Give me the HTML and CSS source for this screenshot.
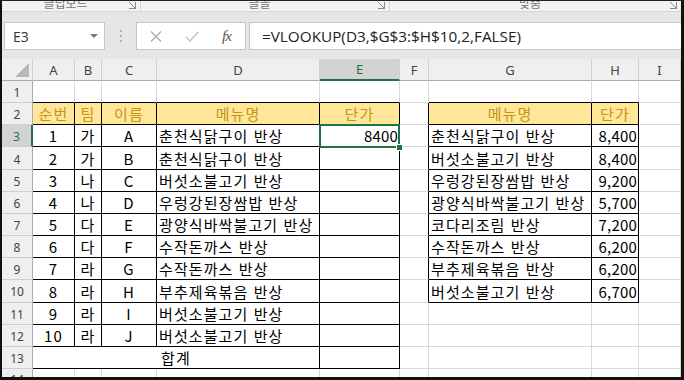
FILE: index.html
```html
<!DOCTYPE html>
<html lang="ko">
<head>
    <meta charset="UTF-8">
    <title>VLOOKUP 단가</title>
    <link rel="stylesheet" href="styles.css">
</head>
<body>

<div class="ventana">
    <!-- grupos de la cinta, cortados arriba -->
    <div class="cinta">
        <div class="grupo g1"><span class="etiqueta">클립보드</span><span class="lanzador"></span></div>
        <div class="grupo g2"><span class="etiqueta">글꼴</span><span class="lanzador"></span></div>
        <div class="grupo g3"><span class="etiqueta">맞춤</span><span class="lanzador"></span></div>
    </div>

    <!-- barra de formulas -->
    <div class="barra">
        <div class="nombre">
            <span>E3</span>
            <span class="flecha"></span>
        </div>
        <div class="puntos"><i></i><i></i><i></i></div>
        <div class="acciones">
            <svg class="ico" width="12" height="11" viewBox="0 0 12 11"><path d="M1 0.5 L11 10.5 M11 0.5 L1 10.5" stroke="#a8a8a8" stroke-width="1.2" fill="none"/></svg>
            <svg class="ico" width="14" height="11" viewBox="0 0 14 11"><path d="M1 6 L5 10 L13 1" stroke="#c2c2c2" stroke-width="1.4" fill="none"/></svg>
            <span class="fx">fx</span>
        </div>
        <div class="formula">=VLOOKUP(D3,$G$3:$H$10,2,FALSE)</div>
    </div>

    <div class="hoja">
        <!-- encabezados de columna -->
        <div class="ch esquina"><svg width="14" height="14" viewBox="0 0 14 14"><polygon points="14,0 14,14 0,14" fill="#b9b9b9"/></svg></div>
        <div class="ch">A</div>
        <div class="ch">B</div>
        <div class="ch">C</div>
        <div class="ch">D</div>
        <div class="ch activo">E</div>
        <div class="ch">F</div>
        <div class="ch">G</div>
        <div class="ch">H</div>
        <div class="ch">I</div>

        <!-- 1 -->
        <div class="rh">1</div>
        <div class="c tb"></div><div class="c tb"></div><div class="c tb"></div><div class="c tb"></div><div class="c tb"></div>
        <div class="c"></div>
        <div class="c tb"></div><div class="c tb"></div>
        <div class="c"></div>

        <!-- 2 -->
        <div class="rh">2</div>
        <div class="c b hd ctr">순번</div>
        <div class="c b hd ctr">팀</div>
        <div class="c b hd ctr">이름</div>
        <div class="c b hd ctr">메뉴명</div>
        <div class="c b hd ctr">단가</div>
        <div class="c lb"></div>
        <div class="c b hd ctr">메뉴명</div>
        <div class="c b hd ctr">단가</div>
        <div class="c"></div>

        <!-- 3 -->
        <div class="rh activo">3</div>
        <div class="c b ctr">1</div>
        <div class="c b ctr">가</div>
        <div class="c b ctr">A</div>
        <div class="c b">춘천식닭구이 반상</div>
        <div class="c b num sel">8400</div>
        <div class="c lb"></div>
        <div class="c b">춘천식닭구이 반상</div>
        <div class="c b num">8,400</div>
        <div class="c"></div>

        <!-- 4 -->
        <div class="rh">4</div>
        <div class="c b ctr">2</div>
        <div class="c b ctr">가</div>
        <div class="c b ctr">B</div>
        <div class="c b">춘천식닭구이 반상</div>
        <div class="c b num"></div>
        <div class="c lb"></div>
        <div class="c b">버섯소불고기 반상</div>
        <div class="c b num">8,400</div>
        <div class="c"></div>

        <!-- 5 -->
        <div class="rh">5</div>
        <div class="c b ctr">3</div>
        <div class="c b ctr">나</div>
        <div class="c b ctr">C</div>
        <div class="c b">버섯소불고기 반상</div>
        <div class="c b num"></div>
        <div class="c lb"></div>
        <div class="c b">우렁강된장쌈밥 반상</div>
        <div class="c b num">9,200</div>
        <div class="c"></div>

        <!-- 6 -->
        <div class="rh">6</div>
        <div class="c b ctr">4</div>
        <div class="c b ctr">나</div>
        <div class="c b ctr">D</div>
        <div class="c b">우렁강된장쌈밥 반상</div>
        <div class="c b num"></div>
        <div class="c lb"></div>
        <div class="c b">광양식바싹불고기 반상</div>
        <div class="c b num">5,700</div>
        <div class="c"></div>

        <!-- 7 -->
        <div class="rh">7</div>
        <div class="c b ctr">5</div>
        <div class="c b ctr">다</div>
        <div class="c b ctr">E</div>
        <div class="c b">광양식바싹불고기 반상</div>
        <div class="c b num"></div>
        <div class="c lb"></div>
        <div class="c b">코다리조림 반상</div>
        <div class="c b num">7,200</div>
        <div class="c"></div>

        <!-- 8 -->
        <div class="rh">8</div>
        <div class="c b ctr">6</div>
        <div class="c b ctr">다</div>
        <div class="c b ctr">F</div>
        <div class="c b">수작돈까스 반상</div>
        <div class="c b num"></div>
        <div class="c lb"></div>
        <div class="c b">수작돈까스 반상</div>
        <div class="c b num">6,200</div>
        <div class="c"></div>

        <!-- 9 -->
        <div class="rh">9</div>
        <div class="c b ctr">7</div>
        <div class="c b ctr">라</div>
        <div class="c b ctr">G</div>
        <div class="c b">수작돈까스 반상</div>
        <div class="c b num"></div>
        <div class="c lb"></div>
        <div class="c b">부추제육볶음 반상</div>
        <div class="c b num">6,200</div>
        <div class="c"></div>

        <!-- 10 -->
        <div class="rh">10</div>
        <div class="c b ctr">8</div>
        <div class="c b ctr">라</div>
        <div class="c b ctr">H</div>
        <div class="c b">부추제육볶음 반상</div>
        <div class="c b num"></div>
        <div class="c lb"></div>
        <div class="c b">버섯소불고기 반상</div>
        <div class="c b num">6,700</div>
        <div class="c"></div>

        <!-- 11 -->
        <div class="rh">11</div>
        <div class="c b ctr">9</div>
        <div class="c b ctr">라</div>
        <div class="c b ctr">I</div>
        <div class="c b">버섯소불고기 반상</div>
        <div class="c b num"></div>
        <div class="c"></div><div class="c"></div><div class="c"></div><div class="c"></div>

        <!-- 12 -->
        <div class="rh">12</div>
        <div class="c b ctr">10</div>
        <div class="c b ctr">라</div>
        <div class="c b ctr">J</div>
        <div class="c b">버섯소불고기 반상</div>
        <div class="c b num"></div>
        <div class="c"></div><div class="c"></div><div class="c"></div><div class="c"></div>

        <!-- 13 -->
        <div class="rh">13</div>
        <div class="c b ctr combinada">합계</div>
        <div class="c b num"></div>
        <div class="c"></div><div class="c"></div><div class="c"></div><div class="c"></div>

        <!-- 14 -->
        <div class="rh">14</div>
        <div class="c"></div><div class="c"></div><div class="c"></div><div class="c"></div><div class="c"></div>
        <div class="c"></div><div class="c"></div><div class="c"></div><div class="c"></div>
    </div>
</div>

</body>
</html>
```

FILE: styles.css
```css
body {
    margin: 0;
    width: 684px;
    height: 380px;
    overflow: hidden;
    background-color: #fff;
    font-family: "Noto Sans CJK KR", "Noto Sans", sans-serif;
}

.ventana {
    box-sizing: border-box;
    height: 380px;
    border-top: 1px solid #222;
    border-left: 2px solid #111;
    border-right: 3px solid #111;
    border-bottom: 3px solid #111;
    display: flex;
    flex-direction: column;
    overflow: hidden;
}

/* cinta */
.cinta {
    height: 10px;
    flex: none;
    display: flex;
    background-color: #f3f3f3;
    border-bottom: 1px solid #d6d6d6;
    overflow: hidden;
}

.grupo {
    display: flex;
    align-items: flex-start;
    border-right: 1px solid #d2d2d2;
}

.g1 { width: 138px; }
.g2 { width: 248px; }
.g3 { flex: 1; border-right: none; }

.etiqueta {
    flex: 1;
    text-align: center;
    font-size: 12px;
    line-height: 12px;
    margin-top: -4px;
    color: #777;
}

.lanzador {
    width: 6px;
    height: 6px;
    margin: 1px 4px 0 0;
    border-right: 1px solid #8a8a8a;
    border-bottom: 1px solid #8a8a8a;
    background: linear-gradient(45deg, transparent 45%, #8a8a8a 45%, #8a8a8a 58%, transparent 58%);
}

/* barra de formulas */
.barra {
    height: 47px;
    flex: none;
    box-sizing: border-box;
    padding: 10px 0 0 2px;
    background-color: #e6e6e6;
    display: flex;
    align-items: flex-start;
}

.nombre {
    box-sizing: border-box;
    width: 101px;
    height: 28px;
    background-color: #fff;
    border: 1px solid #c6c6c6;
    display: flex;
    align-items: center;
    justify-content: space-between;
    padding: 0 6px 0 8px;
    font-family: "Open Sans", sans-serif;
    font-size: 14px;
    color: #333;
}

.flecha {
    width: 0;
    height: 0;
    border-left: 4px solid transparent;
    border-right: 4px solid transparent;
    border-top: 4px solid #777;
}

.puntos {
    width: 31px;
    height: 28px;
    display: flex;
    flex-direction: column;
    align-items: center;
    justify-content: center;
    gap: 3px;
}

.puntos i {
    width: 2px;
    height: 2px;
    background-color: #b3b3b3;
}

.acciones {
    box-sizing: border-box;
    width: 110px;
    height: 28px;
    background-color: #fff;
    border: 1px solid #c6c6c6;
    display: flex;
    align-items: center;
    padding-left: 13px;
    gap: 23px;
}

.fx {
    font-family: "Liberation Serif", serif;
    font-style: italic;
    font-size: 15px;
    color: #555;
    letter-spacing: -1px;
}

.formula {
    flex: 1;
    box-sizing: border-box;
    height: 28px;
    margin-left: 3px;
    background-color: #fff;
    border: 1px solid #c6c6c6;
    border-right: none;
    padding-left: 12px;
    font-family: "Open Sans", sans-serif;
    font-size: 15.3px;
    line-height: 26px;
    color: #222;
}

/* hoja */
.hoja {
    flex: 1;
    display: grid;
    grid-template-columns: 31px 42px 27px 55px 163px 80px 29px 163px 47px 1fr;
    grid-template-rows: 22px repeat(13, 22.17px) 1fr;
    overflow: hidden;
}

.ch, .rh {
    box-sizing: border-box;
    background-color: #efefef;
    color: #444;
    font-family: "Noto Sans", sans-serif;
    font-size: 13px;
    display: flex;
    align-items: center;
    justify-content: center;
}

.ch {
    border-right: 1px solid #cfcfcf;
    border-bottom: 1px solid #ababab;
}

.rh {
    border-right: 1px solid #ababab;
    border-bottom: 1px solid #cfcfcf;
    font-size: 12px;
    padding-top: 2px;
}

.esquina {
    align-items: flex-end;
    justify-content: flex-end;
    padding: 0 3px 3px 0;
}

.ch.activo {
    background-color: #d3d3d3;
    color: #217346;
    border-bottom: 2px solid #217346;
}

.rh.activo {
    background-color: #d3d3d3;
    color: #217346;
    border-right: 2px solid #217346;
}

.c {
    box-sizing: border-box;
    border-right: 1px solid #d9d9d9;
    border-bottom: 1px solid #d9d9d9;
    display: flex;
    align-items: flex-end;
    padding: 0 2px;
    font-size: 15px;
    line-height: 20px;
    letter-spacing: 1.1px;
    color: #000;
    white-space: nowrap;
}

.c.b {
    border-right-color: #000;
    border-bottom-color: #000;
}

.c.tb {
    border-bottom-color: #000;
}

.c.lb {
    border-right-color: #000;
}

.hd {
    background-color: #ffe699;
    color: #c29514;
}

.ctr {
    justify-content: center;
}

.num {
    justify-content: flex-end;
    letter-spacing: 0.2px;
    padding-right: 1px;
}

.combinada {
    grid-column: span 4;
}

/* celda seleccionada */
.sel {
    position: relative;
}

.sel::before {
    content: "";
    position: absolute;
    left: -1px;
    top: -1px;
    right: -1px;
    bottom: -2px;
    border: 2px solid #217346;
}

.sel::after {
    content: "";
    position: absolute;
    right: -4px;
    bottom: -5px;
    width: 5px;
    height: 5px;
    background-color: #217346;
    border: 1px solid #fff;
}
```
